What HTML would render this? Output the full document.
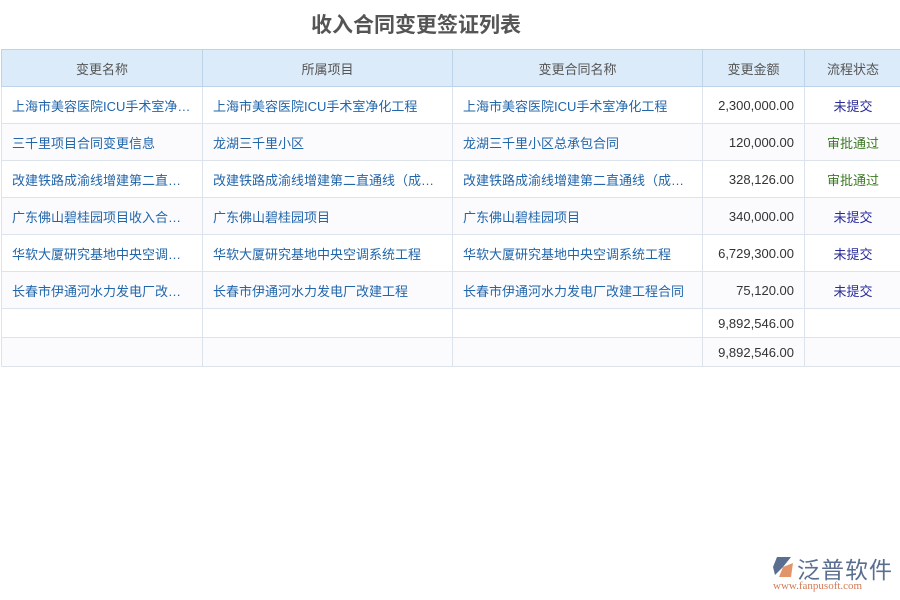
<!DOCTYPE html>
<html><head><meta charset="utf-8"><style>
body{margin:0;width:900px;height:600px;background:#fff;font-family:"Liberation Sans","Noto Sans CJK SC",sans-serif;position:relative;overflow:hidden}
h1{position:absolute;top:9px;left:0;width:832px;text-align:center;margin:0;font-size:21px;color:#555;font-weight:bold}
table{position:absolute;top:49px;left:1px;width:900px;border-collapse:collapse;table-layout:fixed;font-size:13px}
td,th{border:1px solid #dde3ea;white-space:nowrap;overflow:hidden;text-overflow:ellipsis;padding:0 10px;height:36px}
th{background:#dcebf9;font-weight:normal;color:#555;border-color:#bcd3e8;height:36px}
thead tr{border-top:1px solid #a9c5df}
td{color:#2266aa}
td.n{text-align:right;color:#333}
td.s{text-align:center;color:#2a2a99}
td.g{text-align:center;color:#3a7a22}
tr.e td{height:28px}
tr:nth-child(even) td{background:#fbfbfd}
</style></head><body>
<h1>收入合同变更签证列表</h1>
<table>
<colgroup><col style="width:201px"><col style="width:250px"><col style="width:250px"><col style="width:102px"><col style="width:97px"></colgroup>
<thead><tr><th>变更名称</th><th>所属项目</th><th>变更合同名称</th><th>变更金额</th><th>流程状态</th></tr></thead>
<tbody>
<tr><td>上海市美容医院ICU手术室净化工程</td><td>上海市美容医院ICU手术室净化工程</td><td>上海市美容医院ICU手术室净化工程</td><td class="n">2,300,000.00</td><td class="s">未提交</td></tr>
<tr><td>三千里项目合同变更信息</td><td>龙湖三千里小区</td><td>龙湖三千里小区总承包合同</td><td class="n">120,000.00</td><td class="g">审批通过</td></tr>
<tr><td>改建铁路成渝线增建第二直通线</td><td>改建铁路成渝线增建第二直通线（成都段）</td><td>改建铁路成渝线增建第二直通线（成都段）</td><td class="n">328,126.00</td><td class="g">审批通过</td></tr>
<tr><td>广东佛山碧桂园项目收入合同变更</td><td>广东佛山碧桂园项目</td><td>广东佛山碧桂园项目</td><td class="n">340,000.00</td><td class="s">未提交</td></tr>
<tr><td>华软大厦研究基地中央空调系统</td><td>华软大厦研究基地中央空调系统工程</td><td>华软大厦研究基地中央空调系统工程</td><td class="n">6,729,300.00</td><td class="s">未提交</td></tr>
<tr><td>长春市伊通河水力发电厂改建工程</td><td>长春市伊通河水力发电厂改建工程</td><td>长春市伊通河水力发电厂改建工程合同</td><td class="n">75,120.00</td><td class="s">未提交</td></tr>
<tr class="e"><td></td><td></td><td></td><td class="n">9,892,546.00</td><td></td></tr>
<tr class="e"><td></td><td></td><td></td><td class="n">9,892,546.00</td><td></td></tr>
</tbody></table>
<div style="position:absolute;left:771px;top:555px;width:24px;height:24px">
<svg width="24" height="24" viewBox="0 0 24 24"><path d="M6 2 L20 2 L12 12 L4 20 L2 12 Z" fill="#5a6f8f"/><path d="M12 12 L22 8 L20 22 L8 22 Z" fill="#e3956a"/></svg></div>
<div style="position:absolute;left:797px;top:551px;font-size:23px;color:#5a6f8f;letter-spacing:1px">泛普软件</div>
<div style="position:absolute;left:773px;top:580px;font-size:11px;color:#d27a55;font-family:'Liberation Serif',serif">www.fanpusoft.com</div>
</body></html>
